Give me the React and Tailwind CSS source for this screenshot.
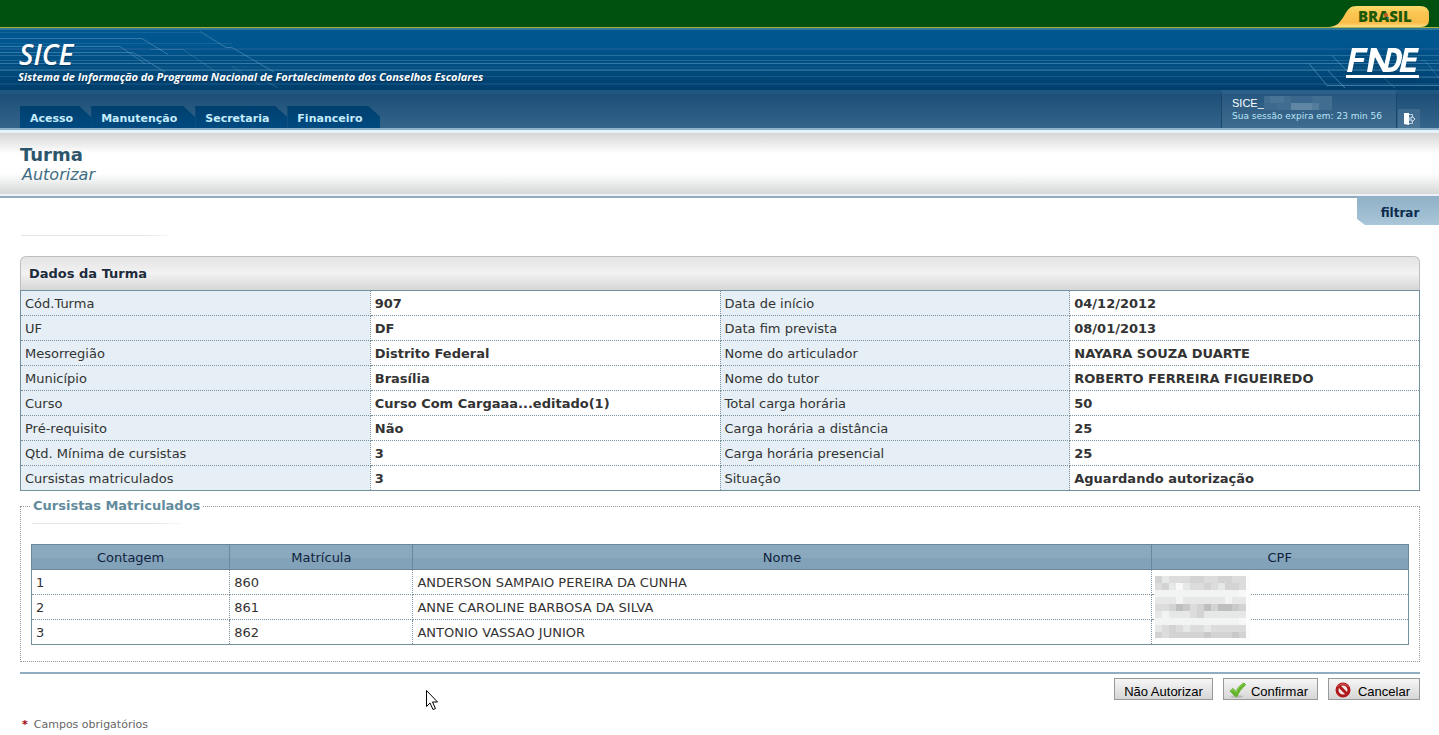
const rows = [
  ['Cód.Turma', '907', 'Data de início', '04/12/2012'],
  ['UF', 'DF', 'Data fim prevista', '08/01/2013'],
  ['Mesorregião', 'Distrito Federal', 'Nome do articulador', 'NAYARA SOUZA DUARTE'],
  ['Município', 'Brasília', 'Nome do tutor', 'ROBERTO FERREIRA FIGUEIREDO'],
  ['Curso', 'Curso Com Cargaaa...editado(1)', 'Total carga horária', '50'],
  ['Pré-requisito', 'Não', 'Carga horária a distância', '25'],
  ['Qtd. Mínima de cursistas', '3', 'Carga horária presencial', '25'],
  ['Cursistas matriculados', '3', 'Situação', 'Aguardando autorização'],
]

const students = [
  ['1', '860', 'ANDERSON SAMPAIO PEREIRA DA CUNHA'],
  ['2', '861', 'ANNE CAROLINE BARBOSA DA SILVA'],
  ['3', '862', 'ANTONIO VASSAO JUNIOR'],
]

const tabs = ['Acesso', 'Manutenção', 'Secretaria', 'Financeiro']

const shades = { a: '#bebebe', b: '#c9c9c9', c: '#d3d3d3', d: '#dcdcdc', e: '#e6e7e7', f: '#f2f4f4', g: '#f8f8f8' }

// One entry per band of the mask: top, height, shade of each cell.
const cpfMask = [
  [0, 7, 'cedddccddccdd'],
  [7, 7, 'dcegeddcdeccd'],
  [14, 7, 'ffffffffffffg'],
  [21, 7, 'eeefeeeeeefee'],
  [28, 7, 'ddcabdcacaabc'],
  [35, 7, 'efeeedceeeeee'],
  [42, 7, 'ffffffffffffg'],
  [49, 7, 'edcdeddeddddd'],
  [56, 6, 'cdcccccbcccbc'],
]

function CpfMask() {
  return (
    <svg className="absolute top-1 left-[3px] z-10" width="96" height="66" viewBox="0 -2 96 66" aria-hidden="true">
      <rect y="-2" width="96" height="66" fill="#fdfdfd" />
      {cpfMask.map(([y, h, cells]) =>
        cells.split('').map((s, i) => <rect key={y + '-' + i} x={i * 7} y={y} width="7" height={h} fill={shades[s]} />),
      )}
    </svg>
  )
}

function Circuit() {
  const line = (y, c, h = 1) => <rect key={y} x="0" y={y} width="100%" height={h} fill={c} />
  return (
    <svg className="absolute inset-0 h-full w-full" aria-hidden="true">
      {line(18, '#135b92', 2)}
      {line(25, '#27709f')}
      {line(30, '#1d6695')}
      {line(33, '#3478a8')}
      {line(36, '#0d5586', 2)}
      {line(39, '#236795', 2)}
      {line(46, '#185b8a')}
      {line(53, '#0e4e7e', 2)}
      <g fill="none" stroke="#6aa0c4" strokeOpacity="0.5">
        <path d="M0 8.500H142L168 24.500" />
        <path d="M0 16.500H120L145 33.500" />
        <path d="M0 22.500H133L165 42" />
        <path d="M200 1.500L226 17.500H232L274 42" />
        <path d="M150 19.500H183L222 46M232 36L260 55M250 42L278 58" strokeOpacity="0.3" />
        <path d="M0 13.500H232M0 2.500H200" strokeOpacity="0.2" />
      </g>
      <svg x="100%" overflow="visible">
        <g fill="none" stroke="#6aa0c4" strokeOpacity="0.6">
          <path d="M-107 25.500L-91 42" />
          <path d="M-130 33.500L-112 55.500H0" />
          <path d="M-111 40.500L-94 58" />
          <path d="M-18 30.500H-14L0 48M-20 47.500H0M-56 47L-44 58" strokeOpacity="0.35" />
        </g>
      </svg>
    </svg>
  )
}

function BrasilBadge() {
  return (
    <svg className="absolute right-2 bottom-0" width="102" height="23" viewBox="0 0 102 23" aria-label="Brasil" role="img">
      <defs>
        <linearGradient id="gold" x1="0" y1="0" x2="0" y2="1">
          <stop offset="0" stopColor="#f9dc6c" />
          <stop offset="0.3" stopColor="#fbc653" />
          <stop offset="0.8" stopColor="#f9bd48" />
          <stop offset="1" stopColor="#fde08a" />
        </linearGradient>
      </defs>
      <path d="M0 22C9 21 11 17 15 11C19 4 21 1 28 1H91Q100 1 100 9V15Q100 22 92 22Z" fill="url(#gold)" />
      <text x="29" y="17" fontFamily="Open Sans, sans-serif" fontWeight="800" fontSize="15" fill="#1c5a08">BRASIL</text>
      <circle cx="57" cy="10" r="2" fill="#c45a1c" />
      <circle cx="59" cy="13" r="1" fill="#2b6fa8" />
    </svg>
  )
}

function Fnde() {
  return (
    <svg className="drop-shadow-md" width="74" height="32" viewBox="0 1 74 32" role="img" aria-label="FNDE">
      <g fill="#fff">
        <path d="M7 1H23L22 5.500H11L9.800 11H19.500L18.500 15H9L7 25H2Z" />
        <path d="M26 1H31.500L39.500 17L43 1H49C58 1 58 10 56 15C54 22 50 25 44 25H38L30 10L27 25H22Z M46.500 5.500L43 20.500C48 21 50.500 18 51.500 13.500C52.700 8 51.500 5 46.500 5.500Z" fillRule="evenodd" />
        <path d="M60 1H74L73 5.500H63.500L62.500 10.500H72L71 14.500H61.600L60.400 20.500H71L70 25H54.500Z" />
        <rect x="1" y="28" width="73" height="3" />
      </g>
    </svg>
  )
}

function Button({ children, icon }) {
  return (
    <button
      type="button"
      className="flex h-[22px] items-center gap-1 border border-[#999] bg-linear-to-b from-[#f6f6f6] to-[#d6d6d6] px-[9px] pt-[5px] font-['Liberation_Sans',Arial,sans-serif] text-[13px] leading-4 whitespace-nowrap text-black"
    >
      {icon}
      {children}
    </button>
  )
}

function CheckIcon() {
  return (
    <svg className="-mt-1 -ml-1" width="18" height="18" viewBox="0 0 18 18" aria-hidden="true">
      <ellipse cx="8" cy="15.500" rx="6" ry="1.500" fill="#000" opacity="0.15" />
      <path d="M1 10L4 7.500L7 10.500C9 6.500 11 4 15 2L16.500 4C12 7.500 10 11 8 15.500H6.500Z" fill="#63b42c" stroke="#63b42c" />
      <path d="M2 10L4 8.500L7 11.500C9 7.500 11 5 14.500 3" fill="none" stroke="#8fd35a" />
    </svg>
  )
}

function CancelIcon() {
  return (
    <svg className="-mt-1 -ml-1 mr-[2px]" width="18" height="18" viewBox="0 0 18 18" aria-hidden="true">
      <circle cx="9" cy="9" r="6" fill="#f3e6e6" stroke="#b0191c" strokeWidth="3" />
      <path d="M5 5L13 13" stroke="#b0191c" strokeWidth="3" />
      <path d="M3.500 6A6.500 6.500 0 0 1 14.500 6" fill="none" stroke="#d9605c" />
    </svg>
  )
}

function ExitIcon() {
  return (
    <svg width="13" height="14" viewBox="0 0 13 14" aria-hidden="true">
      <path d="M1 1H6V13L1 12Z" fill="#fff" />
      <path d="M6 2.500H9.500V4M6 11.500H9.500V10" fill="none" stroke="#b9d0e0" />
      <path d="M6 6H9V4L12 7L9 10V8H6Z" fill="#4a7596" stroke="#cfe0ec" />
    </svg>
  )
}

function FaintRule() {
  return <div className="ml-px h-px w-[150px] bg-linear-to-r from-[#e4e4e4] from-80% to-[#fafafa]" />
}

export default function App() {
  const dotted = 'border border-dotted border-[#7a92a0]'
  return (
    <div className="relative min-h-screen bg-white font-['DejaVu_Sans',Verdana,sans-serif] text-[13px] leading-4 text-[#333]">
      <header>
        <div className="relative h-[30px] border-b-2 border-[#2f7798] bg-[#00510f]">
          <div className="h-7 border-b border-[#a9b13c]" />
          <BrasilBadge />
        </div>
        <div className="relative flex h-[60px] items-start justify-between bg-linear-to-b from-[#00568f] from-25% via-[#004d80] via-60% to-[#003e6b] pr-5 pl-[18px]">
          <Circuit />
          <div className="relative pt-2 font-['Open_Sans',sans-serif] text-white italic text-shadow-md">
            <h1 className="pl-px text-[28px] leading-8 font-semibold">SICE</h1>
            <p className="text-[11px] leading-[14px] font-bold">Sistema de Informação do Programa Nacional de Fortalecimento dos Conselhos Escolares</p>
          </div>
          <div className="relative pt-[18px]">
            <Fnde />
          </div>
        </div>
        <div className="flex h-10 items-end justify-between border-b-2 border-[#8fb2cc] bg-linear-to-b from-[#194c76] to-[#34648a]">
          <nav className="flex grow items-end self-stretch border-t-4 border-[#1f5780] pl-5">
            {tabs.map((t) => (
              <a
                key={t}
                href="#"
                className="h-[22px] bg-linear-to-b from-[#00406f] to-[#004a80] pt-[5px] pr-[18px] pl-[10px] text-[11px] font-bold text-[#c5ecfb] [clip-path:polygon(0_0,calc(100%-12px)_0,100%_11px,100%_100%,0_100%)]"
              >
                {t}
              </a>
            ))}
          </nav>
          <div className="h-full w-[176px] border-x border-t-4 border-x-[#1b466b] border-t-[#2b6089] bg-white/5 pt-[2px] pl-[10px]">
            <div className="flex items-center font-['Liberation_Sans',Arial,sans-serif] text-[11px] leading-[14px] text-white">
              SICE_
              <svg className="-ml-px" width="69" height="14" viewBox="0 0 69 14" aria-hidden="true">
                <rect x="1" width="68" height="14" fill="#416d90" />
                <rect x="7" width="14" height="7" fill="#4a7495" />
                <rect x="28" width="21" height="7" fill="#3a678b" />
                <rect x="28" y="7" width="21" height="7" fill="#5f86a2" />
                <rect x="49" y="7" width="7" height="7" fill="#547d9b" />
                <rect x="1" y="7" width="13" height="7" fill="#3c698c" />
              </svg>
            </div>
            <p className="text-[9px] leading-3 whitespace-nowrap text-[#b9e4f7]">Sua sessão expira em: 23 min 56</p>
          </div>
          <div className="flex h-full w-[42px] items-end border-t-4 border-[#1f5780] pl-px">
            <button type="button" aria-label="Sair" className="flex h-[19px] w-[22px] items-center justify-center bg-white/10">
              <ExitIcon />
            </button>
          </div>
        </div>
      </header>

      <section className="flex h-[68px] flex-col border-t-3 border-b-2 border-t-[#e6f2f9] border-b-[#90adbb] bg-[linear-gradient(#d6d6d6,#fff_33%,#fff_64%,#d6d9d8_96%,#f0f1f8_97%)] px-5 pt-[10px]">
        <h2 className="text-[18px] leading-6 font-bold text-[#2b566c]">Turma</h2>
        <p className="pl-[2px] text-[16px] leading-4 text-[#3f6c82] italic">Autorizar</p>
      </section>

      <div className="-mt-0.5 flex justify-end">
        <button
          type="button"
          className="h-[29px] w-[82px] bg-linear-to-b from-[#8fb0c6] to-[#aac6d8] pt-1 pl-1 text-[12px] font-bold text-[#0b2c4d] [clip-path:polygon(0_0,100%_0,100%_100%,8px_100%,0_calc(100%-6px))]"
        >
          filtrar
        </button>
      </div>

      <main className="pr-[19px] pl-5">
        <div className="pt-[10px]">
          <FaintRule />
        </div>
        <h3 className="mt-5 h-[34px] rounded-t-md border border-b-0 border-[#bfbfbf] bg-linear-to-b from-[#e4e4e4] via-[#f2f2f2] to-[#d6d6d6] px-2 pt-[9px] font-bold text-[#1d2b3c]">
          Dados da Turma
        </h3>
        <table className="w-full table-fixed border-collapse border border-[#73909f]">
          <tbody>
            {rows.map((r) => (
              <tr key={r[0]} className="h-[25px]">
                {r.map((c, i) =>
                  i % 2 ? (
                    <td key={i} className={dotted + ' px-1 pt-[2px] font-bold'}>{c}</td>
                  ) : (
                    <th key={i} scope="row" className={dotted + ' bg-[#e5eff5] px-1 pt-[2px] text-left font-normal'}>{c}</th>
                  ),
                )}
              </tr>
            ))}
          </tbody>
        </table>

        <fieldset className="mt-[7px] border border-dotted border-[#999] px-[10px] pb-4">
          <legend className="px-[2px] font-bold text-[#628b9d]">Cursistas Matriculados</legend>
          <div className="pt-[9px]">
            <FaintRule />
          </div>
          <table className="mt-5 w-full table-fixed border-collapse border border-[#73909f]">
            <thead>
              <tr className="h-[25px] bg-linear-to-b from-[#8ba9be] from-50% to-[#82a2b9] to-50% text-[#0f1f3d]">
                <th className="w-[14.4%] border border-[#6b8799] pt-[2px] font-normal">Contagem</th>
                <th className="w-[13.3%] border border-[#6b8799] pt-[2px] font-normal">Matrícula</th>
                <th className="border border-[#6b8799] pt-[2px] font-normal">Nome</th>
                <th className="w-[18.7%] border border-[#6b8799] pt-[2px] font-normal">CPF</th>
              </tr>
            </thead>
            <tbody>
              {students.map((s, n) => (
                <tr key={s[0]} className="h-[25px]">
                  {s.map((c, i) => (
                    <td key={i} className={dotted + ' px-1 pt-[2px]'}>{c}</td>
                  ))}
                  <td className={dotted + ' relative'}>{n === 0 && <CpfMask />}</td>
                </tr>
              ))}
            </tbody>
          </table>
        </fieldset>

        <div className="mt-[10px] flex justify-end gap-[10px] border-t-2 border-[#90aec0] pt-1">
          <Button>Não Autorizar</Button>
          <Button icon={<CheckIcon />}>Confirmar</Button>
          <Button icon={<CancelIcon />}>Cancelar</Button>
        </div>
        <p className="mt-[17px] flex gap-[6px] pl-[2px] text-[11px] text-[#666]">
          <span className="font-bold text-[#a00010]">*</span>
          Campos obrigatórios
        </p>
      </main>

      <svg className="absolute top-[689px] left-[425px]" width="14" height="22" viewBox="0 0 14 22" aria-hidden="true">
        <path d="M1.500 1.500V17.500L5 14L8 20.500L10.500 19.500L7.500 13H12.500Z" fill="#fff" stroke="#000" />
      </svg>
    </div>
  )
}
